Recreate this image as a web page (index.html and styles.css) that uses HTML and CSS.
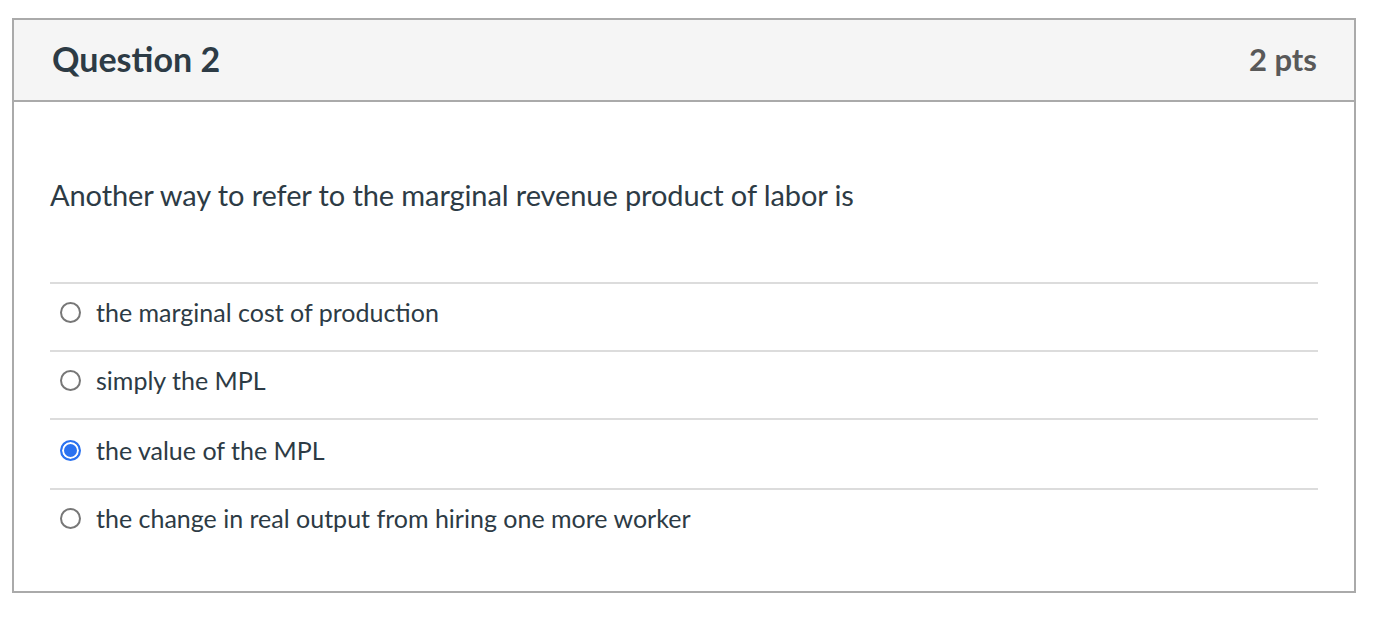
FILE: index.html
```html
<!DOCTYPE html>
<html>
<head>
<meta charset="utf-8">
<link rel="stylesheet" href="styles.css">
</head>
<body>
<div class="card">
  <div class="header">
    <h2 class="title">Question 2</h2>
    <div class="pts">2 pts</div>
  </div>
  <div class="body">
    <p class="question">Another way to refer to the marginal revenue product of labor is</p>
    <div class="answers">
      <div class="answer"><span class="radio"></span><span class="label">the marginal cost of production</span></div>
      <div class="answer"><span class="radio"></span><span class="label">simply the MPL</span></div>
      <div class="answer selected"><span class="radio checked"></span><span class="label">the value of the MPL</span></div>
      <div class="answer"><span class="radio"></span><span class="label">the change in real output from hiring one more worker</span></div>
    </div>
  </div>
</div>
</body>
</html>
```

FILE: styles.css
```css
html, body {
  margin: 0;
  padding: 0;
  background: #fff;
}
body {
  font-family: Lato, "Open Sans", sans-serif;
  color: #2d3b45;
}
.card {
  margin: 18px 0 0 12px;
  width: 1344px;
  height: 575px;
  box-sizing: border-box;
  border: 2px solid #aaaaaa;
}
.header {
  height: 82px;
  box-sizing: border-box;
  background: #f5f5f5;
  border-bottom: 2px solid #aaaaaa;
  display: flex;
  align-items: center;
  justify-content: space-between;
  padding: 0 37px 2px 38px;
}
.title {
  margin: 0;
  font-size: 34px;
  font-weight: 700;
  line-height: 40px;
  color: #2d3b45;
}
.pts {
  font-size: 31px;
  font-weight: 700;
  line-height: 40px;
  color: #595959;
}
.body {
  padding: 0 36px 0 36px;
}
.question {
  margin: 0;
  padding-top: 76px;
  height: 180px;
  box-sizing: border-box;
  font-size: 29px;
  line-height: 34px;
  letter-spacing: -0.1px;
}
.answers {
  display: flex;
  flex-direction: column;
}
.answer {
  display: flex;
  align-items: flex-start;
  height: 68px;
  padding-top: 13px;
  border-top: 2px solid #dcdcdc;
  box-sizing: border-box;
}
.answer.selected {
  height: 70px;
  padding-top: 15px;
}
.radio {
  width: 21px;
  height: 21px;
  box-sizing: border-box;
  border: 2px solid #777;
  border-radius: 50%;
  margin: 5px 15px 0 10px;
  flex: none;
}
.radio.checked {
  border: 2px solid #2b72f0;
  background: #2b72f0;
  box-shadow: inset 0 0 0 2px #fff;
}
.label {
  font-size: 25px;
  line-height: 30px;
}
```
